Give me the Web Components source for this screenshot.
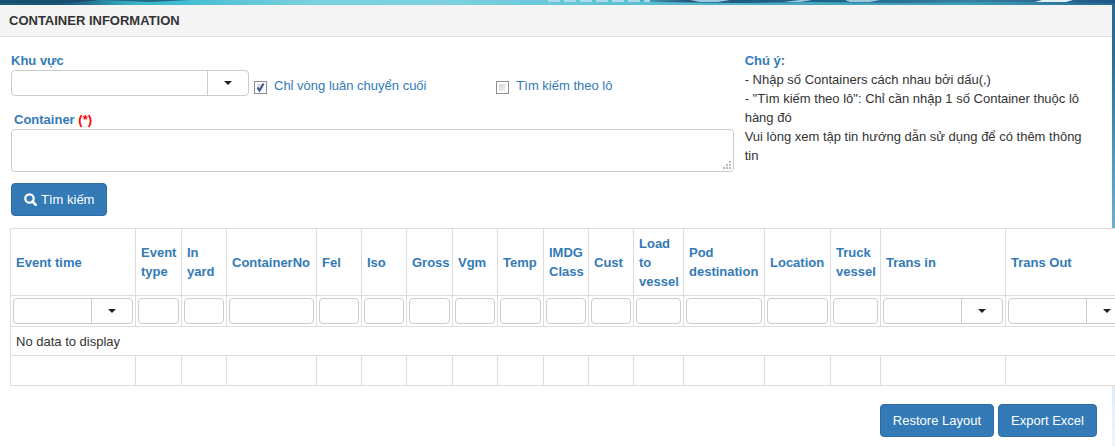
<!DOCTYPE html>
<html lang="vi">
<head>
<meta charset="utf-8">
<title>Container Information</title>
<style>
html { min-height: 100%; background: linear-gradient(#2a6a91 0, #2b7094 60px, #4a98b8 150px, #7fb9d2 260px, #dcebf5 380px, #f1f6fc); }
body { margin: 0; overflow-x: hidden; color: #333; font: 13px/19px "Liberation Sans", Arial, sans-serif; }
</style>
</head>
<body>
<page-banner></page-banner>
<info-panel heading="CONTAINER INFORMATION">
  <search-form></search-form>
  <data-grid></data-grid>
  <button-bar>
    <action-button>Restore Layout</action-button>
    <action-button>Export Excel</action-button>
  </button-bar>
</info-panel>
<script>
function define(name, markup, setup) {
  customElements.define(name, class extends HTMLElement {
    constructor() {
      super();
      const t = document.createElement('template');
      t.innerHTML = markup;
      this.attachShadow({ mode: 'open' }).append(t.content.cloneNode(true));
    }
    connectedCallback() { if (setup) setup(this, this.shadowRoot); }
  });
}

define('page-banner', `
<style>
:host { display: block; height: 5px; }
svg { display: block; width: 100%; height: 5px; }
</style>
<svg viewBox="0 0 1115 5" preserveAspectRatio="none" aria-hidden="true">
  <defs>
    <linearGradient id="sky"><stop offset="0" stop-color="#1e5c7c"/><stop offset=".05" stop-color="#1a5276"/><stop offset=".08" stop-color="#247592"/><stop offset=".12" stop-color="#38b4cb"/><stop offset=".17" stop-color="#45bed3"/><stop offset=".27" stop-color="#79cfdd"/><stop offset=".4" stop-color="#7dd1e0"/><stop offset=".55" stop-color="#5cc2d6"/><stop offset=".7" stop-color="#4aa9c3"/><stop offset=".88" stop-color="#3d9bb5"/><stop offset="1" stop-color="#256891"/></linearGradient>
    <linearGradient id="sea"><stop offset="0" stop-color="#174f73" stop-opacity="0"/><stop offset=".12" stop-color="#22577d"/><stop offset=".4" stop-color="#1b648b"/><stop offset=".7" stop-color="#397da3"/><stop offset="1" stop-color="#1e5486"/></linearGradient>
  </defs>
  <rect width="1115" height="5" fill="url(#sky)"/>
  <path d="M0 0H100L70 3H0Z" fill="#174d70"/>
  <path d="M100 0H190L150 2Z" fill="#226784"/>
  <path d="M630 0H1115V3L1010 2L900 3L810 2L740 3L650 2Z" fill="url(#sea)"/>
  <path d="M548 1H650" stroke="#a9dce9" stroke-width="2" stroke-dasharray="12 4"/>
  <path d="M690 0L700 2H718L730 0ZM784 2L800 0H812L800 2ZM845 0H880L870 2H850Z" fill="#9ccbdf"/>
  <path d="M1035 2L1042 0H1073L1066 2Z" fill="#e2f2f8"/>
</svg>`);

define('info-panel', `
<style>
:host { display: block; margin-right: 3px; background: #fff; }
h1 { margin: 0; padding: 6px 9px; border-bottom: 1px solid #ddd; background: #f4f4f4; font-size: 13px; line-height: 19px; font-weight: bold; }
.body { padding: 14px 0 9px; }
</style>
<section aria-labelledby="h"><h1 id="h"></h1><div class="body"><slot></slot></div></section>`,
(el, root) => { root.querySelector('h1').textContent = el.getAttribute('heading'); });

define('action-button', `
<style>
:host { display: inline-block; }
button { display: flex; align-items: center; gap: 4px; margin: 0; padding: 6px 12px; border: 1px solid #2e6da4; border-radius: 4px; background: #337ab7; color: #fff; font: inherit; white-space: nowrap; cursor: pointer; }
</style>
<button type="button"><slot name="icon"></slot><span><slot></slot></span></button>`);

define('button-bar', `
<style>
:host { display: flex; justify-content: flex-end; gap: 4px; padding: 18px 15px 0; }
</style><slot></slot>`);

define('combo-box', `
<style>
:host { display: block; }
.box { display: grid; position: relative; }
label { color: #337ab7; font-weight: bold; }
label:empty { display: none; }
select { appearance: none; box-sizing: border-box; width: 100%; height: 26px; margin: 0; padding: 0 44px 0 6px; border: 1px solid #ccc; border-radius: 4px; background: linear-gradient(#ccc, #ccc) right 40px top / 1px 100% no-repeat #fff; font: inherit; color: inherit; }
svg { position: absolute; right: 17px; top: 11px; width: 8px; height: 4px; fill: #222; pointer-events: none; }
</style>
<label for="s"></label>
<div class="box"><select id="s"><option></option></select><svg viewBox="0 0 8 4" aria-hidden="true"><path d="M0 0H8L4 4Z"/></svg></div>`,
(el, root) => {
  root.querySelector('label').textContent = el.getAttribute('label') || '';
  if (el.hasAttribute('name')) root.querySelector('select').setAttribute('aria-label', el.getAttribute('name'));
});

define('check-field', `
<style>
:host { display: block; }
label { display: flex; gap: 7px; color: #337ab7; }
input { appearance: none; box-sizing: border-box; flex: none; width: 13px; height: 13px; margin: 5px 0 0; border: 1px solid #8e8f8f; background: linear-gradient(135deg, #cfd3d8, #f6f6f6) content-box #fff; padding: 2px; }
input:checked { background: url("data:image/svg+xml,%3Csvg xmlns='http://www.w3.org/2000/svg' viewBox='0 0 11 11'%3E%3Cpath d='M2.5 5.5L4.5 8.5L8.5 1.5' fill='none' stroke='%23435391' stroke-width='2'/%3E%3C/svg%3E") center / 11px 11px no-repeat border-box, linear-gradient(135deg, #cfd3d8, #f6f6f6) content-box #fff; }
</style>
<label><input type="checkbox"><span><slot></slot></span></label>`,
(el, root) => { root.querySelector('input').checked = el.hasAttribute('checked'); });

define('area-field', `
<style>
:host { display: block; }
label { display: block; padding-left: 3px; color: #337ab7; font-weight: bold; }
em { color: red; font-style: normal; }
textarea { display: block; box-sizing: border-box; width: 100%; height: 43px; margin: 0; padding: 4px 6px; border: 1px solid #ccc; border-radius: 4px; background: #fff; font: inherit; color: inherit; resize: vertical; }
textarea::-webkit-resizer { background: url("data:image/svg+xml,%3Csvg xmlns='http://www.w3.org/2000/svg' width='15' height='15' fill='%23bbb'%3E%3Cpath d='M11 5h2v2h-2zM8 8h2v2H8zM11 8h2v2h-2zM5 11h2v2H5zM8 11h2v2H8zM11 11h2v2h-2z'/%3E%3C/svg%3E") right bottom no-repeat; }
</style>
<label for="t"><slot></slot> <em>(*)</em></label>
<textarea id="t"></textarea>`);

define('user-notes', `
<style>
:host { display: block; padding-right: 12px; }
h2 { margin: 0; color: #337ab7; font-size: 13px; line-height: 19px; }
p { margin: 0; }
</style><h2>Chú ý:</h2><slot></slot>`);

define('search-form', `
<style>
:host { display: grid; grid-template-columns: 2fr 1fr; gap: 11px; padding: 0 6px 0 11px; }
p { margin: 0; }
.row { display: grid; grid-template-columns: 238px 1fr 1fr; align-items: end; }
.row check-field { margin: 0 0 1px 5px; }
area-field { margin-top: 14px; }
action-button { margin-top: 11px; }
svg { display: block; width: 13px; height: 13px; fill: none; stroke: #fff; }
</style>
<form>
  <div class="row">
    <combo-box label="Khu vực"></combo-box>
    <check-field checked>Chỉ vòng luân chuyển cuối</check-field>
    <check-field>Tìm kiếm theo lô</check-field>
  </div>
  <area-field>Container</area-field>
  <action-button>
    <svg slot="icon" viewBox="0 0 13 13" aria-hidden="true"><circle cx="5.5" cy="5.5" r="4.2" stroke-width="2.2"/><path d="M8.5 8.5L11.8 11.8" stroke-width="2.6" stroke-linecap="round"/></svg>Tìm kiếm</action-button>
</form>
<user-notes>
  <p>- Nhập số Containers cách nhau bởi dấu(,)</p>
  <p>- "Tìm kiếm theo lô": Chỉ cần nhập 1 số Container thuộc lô hàng đó</p>
  <p>Vui lòng xem tập tin hướng dẫn sử dụng để có thêm thông tin</p>
</user-notes>`);

const columns = [
  ['Event time', 125, true], ['Event type', 46], ['In yard', 45], ['ContainerNo', 90], ['Fel', 45],
  ['Iso', 45], ['Gross', 46], ['Vgm', 45], ['Temp', 46], ['IMDG Class', 45], ['Cust', 45],
  ['Load to vessel', 50], ['Pod destination', 81], ['Location', 66], ['Truck vessel', 50],
  ['Trans in', 125, true], ['Trans Out', 125, true]
];

define('data-grid', `
<style>
:host { display: block; margin: 12px 0 0 10px; }
table { width: 1121px; border-collapse: collapse; table-layout: fixed; background: #fff; }
th, td { box-sizing: border-box; border: 1px solid #ddd; padding: 0 5px; text-align: left; }
th { height: 67px; color: #337ab7; }
td { height: 30px; }
.filters td { height: 31px; padding: 2px; }
.empty td { height: 29px; }
input { display: block; box-sizing: border-box; width: 100%; height: 26px; margin: 0; padding: 0 4px; border: 1px solid #ccc; border-radius: 4px; background: #fff; font: inherit; color: inherit; }
</style>
<table>
  <colgroup></colgroup>
  <thead><tr class="head"></tr><tr class="filters"></tr></thead>
  <tbody><tr class="empty"><td colspan="17">No data to display</td></tr></tbody>
  <tfoot><tr class="foot"></tr></tfoot>
</table>`,
(el, root) => {
  const fill = (sel, fn) => { root.querySelector(sel).innerHTML = columns.map(fn).join(''); };
  fill('colgroup', c => `<col style="width:${c[1]}px">`);
  fill('.head', c => `<th scope="col">${c[0]}</th>`);
  fill('.filters', c => `<td>${c[2] ? `<combo-box name="${c[0]}"></combo-box>` : `<input type="text" aria-label="${c[0]}">`}</td>`);
  fill('.foot', () => '<td></td>');
});
</script>
</body>
</html>
